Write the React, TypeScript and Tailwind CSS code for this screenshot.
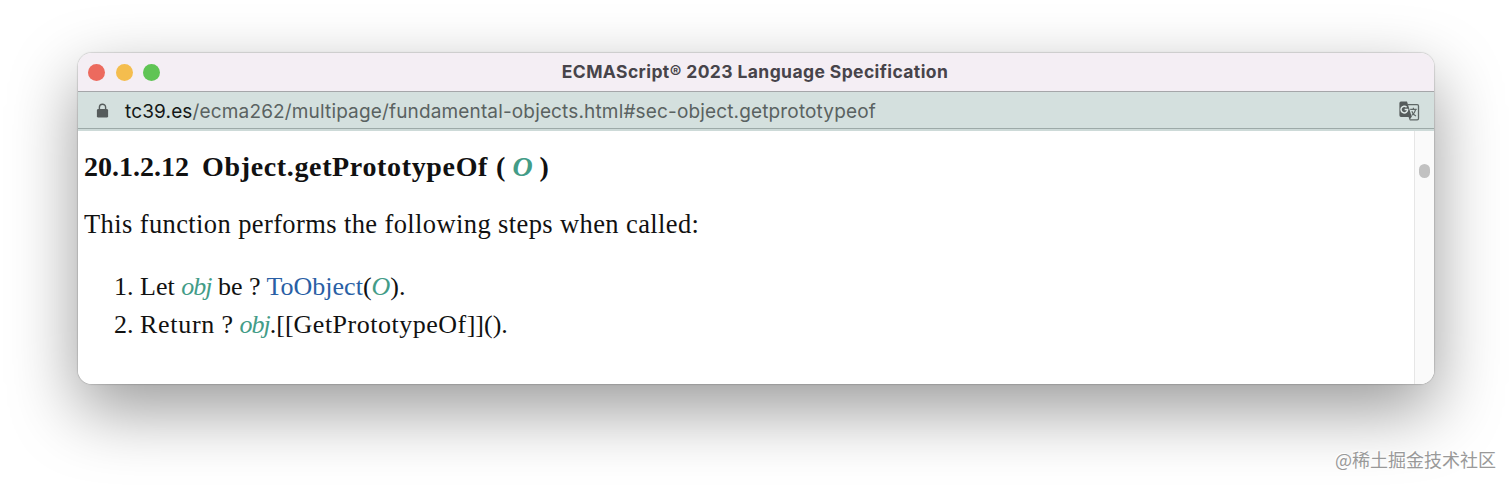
import React from "react";

const Lock = () => (
  <svg width="13" height="15" viewBox="0 0 13 15" className="mt-px shrink-0">
    <path d="M3.4 7V4.3a3.1 3.1 0 0 1 6.2 0V7" fill="none" stroke="#565c5c" strokeWidth="1.4" />
    <rect x="0.9" y="6" width="11.2" height="8.6" rx="1.4" fill="#565c5c" />
  </svg>
);

const Translate = () => (
  <svg width="21" height="20" viewBox="0 0 21 20" className="mt-px shrink-0">
    <path d="M9 3.6h9.2a1.3 1.3 0 0 1 1.3 1.3v12.6a1.3 1.3 0 0 1-1.3 1.3h-7.4" fill="none" stroke="#5f6766" strokeWidth="1.3" />
    <path d="M2 .5h6l4.8 15.4H2A1.6 1.6 0 0 1 .4 14.3V2A1.6 1.6 0 0 1 2 .5z" fill="#565c5c" />
    <path d="M9.4 15.5h3.4l-2.2 3.6z" fill="#565c5c" />
    <path d="M7.6 6.2A3.3 3.3 0 1 0 8.6 8.5H5.6" fill="none" stroke="#dfe8e6" strokeWidth="1.5" />
    <path d="M11.2 8.4h6.5M14.4 6.8v1.6M16.6 8.6c-.6 2.8-2.2 4.8-4 5.8M12.8 10.2c.8 2.2 2.2 3.8 4.2 4.8" fill="none" stroke="#5f6766" strokeWidth="1.2" />
  </svg>
);

const Var = ({ children }: { children: React.ReactNode }) => (
  <var className="text-[#439c87] italic">{children}</var>
);

const App = () => {
  return (
    <main className="flex h-[487px] flex-col overflow-hidden bg-white px-[78px] pt-[53px]">
      <section className="flex h-[331px] flex-col rounded-[14px] shadow-[0_0_1px_1px_rgba(0,0,0,0.13),0_26px_68px_rgba(0,0,0,0.4)]">
        <header className="grid h-[39px] shrink-0 grid-cols-[1fr_auto_1fr] items-center rounded-t-[14px] border-b border-[#a5a6a9] bg-[#f4eef4]">
          <div className="flex gap-[10.5px] pl-[10px]">
            <span className="size-[17px] rounded-full bg-[#ec6a5e]"></span>
            <span className="size-[17px] rounded-full bg-[#f4bd4e]"></span>
            <span className="size-[17px] rounded-full bg-[#5fc454]"></span>
          </div>
          <h1 className="mr-[2px] pb-px font-[Inter,sans-serif] text-[17.5px] leading-none font-bold tracking-[0.4px] whitespace-nowrap text-[#47444a]">
            ECMAScript® 2023 Language Specification
          </h1>
        </header>

        <div className="flex h-[37px] shrink-0 items-center border-b border-[#9daaa8] bg-[#d4e0de] pr-[14px] pl-[18px]">
          <Lock />
          <p className="ml-[16px] pt-[2px] font-[Inter,sans-serif] text-[19px] leading-none tracking-[0.15px] whitespace-nowrap text-[#5a6261]">
            <span className="text-[#151817]">tc39.es</span>/ecma262/multipage/fundamental-objects.html#sec-object.getprototypeof
          </p>
          <div className="ml-auto">
            <Translate />
          </div>
        </div>
        <div className="h-[2px] shrink-0 bg-[#cddad8]"></div>

        <div className="flex flex-1 overflow-hidden rounded-b-[14px] bg-white">
          <article className="flex-1 pl-[6px] font-['Liberation_Serif',serif] text-[26px] leading-[37.5px] whitespace-nowrap text-[#111]">
            <h2 className="mt-[17px] text-[28px] font-bold">
              <span className="mr-[13px]">20.1.2.12</span>
              <span className="tracking-[0.65px]">Object.getPrototypeOf</span>
              <span className="ml-px">
                {" "}( <Var>O</Var> )
              </span>
            </h2>
            <p className="mt-[20px] text-[26.5px] tracking-[0.39px]">This function performs the following steps when called:</p>
            <ol className="mt-[25px] pl-[30px]">
              <li>
                1. Let <span className="tracking-[-1px]"><Var>obj</Var></span> be ?{" "}
                <a className="text-[#2a5fa5]">ToObject</a>(<Var>O</Var>).
              </li>
              <li>
                2. <span className="tracking-[0.7px]">Return</span> ?{" "}
                <span className="tracking-[-1px]"><Var>obj</Var></span>.[[
                <span className="tracking-[0.5px]">GetPrototypeOf</span>]]().
              </li>
            </ol>
          </article>
          <aside className="flex w-[20px] justify-center border-l border-[#e6e6e6] bg-[#fafafa] pt-[33px]">
            <span className="h-[14px] w-[11px] rounded-full bg-[#c1c1c1]"></span>
          </aside>
        </div>
      </section>

      <footer className="mt-[61px] -mr-[62px] text-right font-['Noto_Sans_CJK_SC',sans-serif] text-[18px] leading-[28px] text-[#999] [text-shadow:-1px_-1px_0_#fff]">
        @稀土掘金技术社区
      </footer>
    </main>
  );
};

export default App;
